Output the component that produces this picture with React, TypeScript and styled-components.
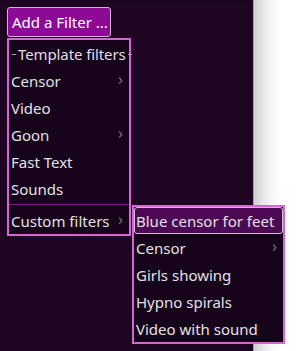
import React from "react";
import styled, { createGlobalStyle } from "styled-components";

const Global = createGlobalStyle`
  html, body { margin: 0; padding: 0; }
  body { font-family: "Noto Sans", "Open Sans", sans-serif; background: #ffffff; }
`;

const Page = styled.div`
  display: flex;
  width: 300px;
  height: 351px;
  overflow: hidden;
`;

const Main = styled.div`
  position: relative;
  width: 253px;
  height: 100%;
  background: #1e0623;
  border-top: 2px solid #190520;
  box-sizing: border-box;
  padding: 5px 0 0 7px;
`;

const Divider = styled.div`
  width: 1px;
  background: #f0901e;
`;

const Side = styled.div`
  flex: 1;
  background: linear-gradient(to right, #d0d0d0 0px, #eeeeee 12px, #fbfbfb 22px, #ffffff 28px);
`;

const AddButton = styled.button`
  display: flex;
  align-items: center;
  height: 30px;
  width: 104px;
  box-sizing: border-box;
  padding: 0 0 0 4px;
  margin: 0;
  background: #8d0a96;
  border: 1px solid #c9b8cb;
  border-radius: 3px;
  color: #ffffff;
  font-family: inherit;
  font-size: 15px;
  white-space: nowrap;
`;

const Menu = styled.div<{ $width: number }>`
  width: ${(p) => p.$width}px;
  box-sizing: border-box;
  border: 2px solid #d466d6;
  background: #16041b;
  display: flex;
  flex-direction: column;
`;

const MainMenu = styled(Menu)`
  margin-top: 1px;
`;

const Popup = styled(Menu)`
  position: absolute;
  left: 132px;
  top: 203px;
`;

const Header = styled.div`
  display: flex;
  align-items: center;
  height: 27px;
  padding: 0 1px;
  color: #e2dde3;
  font-size: 15px;
  letter-spacing: -0.1px;
  white-space: nowrap;
`;

const Dash = styled.span`
  display: block;
  width: 4px;
  height: 1px;
  margin: 1px 2px 0;
  background: #a8a0aa;
  flex: none;
`;

const Item = styled.div<{ $active?: boolean }>`
  display: flex;
  align-items: center;
  justify-content: space-between;
  height: 27px;
  box-sizing: border-box;
  padding: 0 6px 0 ${(p) => (p.$active ? 1 : 2)}px;
  color: #e4e0e5;
  font-size: 15px;
  white-space: nowrap;
  background: ${(p) => (p.$active ? "#4d0a54" : "transparent")};
  border: ${(p) => (p.$active ? "1px solid #cdbfcf" : "none")};
  border-radius: ${(p) => (p.$active ? "3px" : "0")};
`;

const Chevron = styled.span`
  color: #7d7280;
  font-size: 16px;
  line-height: 1;
  margin-top: -3px;
`;

const Separator = styled.div`
  height: 1px;
  background: #8a0b90;
  margin: 2px 0 2px;
`;

type Entry = { label: string; sub?: boolean };

const templateItems: Entry[] = [
  { label: "Censor", sub: true },
  { label: "Video" },
  { label: "Goon", sub: true },
  { label: "Fast Text" },
  { label: "Sounds" },
];

const customItems: Entry[] = [
  { label: "Censor", sub: true },
  { label: "Girls showing" },
  { label: "Hypno spirals" },
  { label: "Video with sound" },
];

export default function App() {
  return (
    <>
      <Global />
      <Page>
        <Main>
          <AddButton>Add a Filter ...</AddButton>
          <MainMenu $width={124}>
            <Header>
              <Dash />
              <span>Template filters</span>
              <Dash />
            </Header>
            {templateItems.map((it) => (
              <Item key={it.label}>
                <span>{it.label}</span>
                {it.sub && <Chevron>›</Chevron>}
              </Item>
            ))}
            <Separator />
            <Item>
              <span>Custom filters</span>
              <Chevron>›</Chevron>
            </Item>
          </MainMenu>
          <Popup $width={153}>
            <Item $active>
              <span>Blue censor for feet</span>
            </Item>
            {customItems.map((it) => (
              <Item key={it.label}>
                <span>{it.label}</span>
                {it.sub && <Chevron>›</Chevron>}
              </Item>
            ))}
          </Popup>
        </Main>
        <Divider />
        <Side />
      </Page>
    </>
  );
}
